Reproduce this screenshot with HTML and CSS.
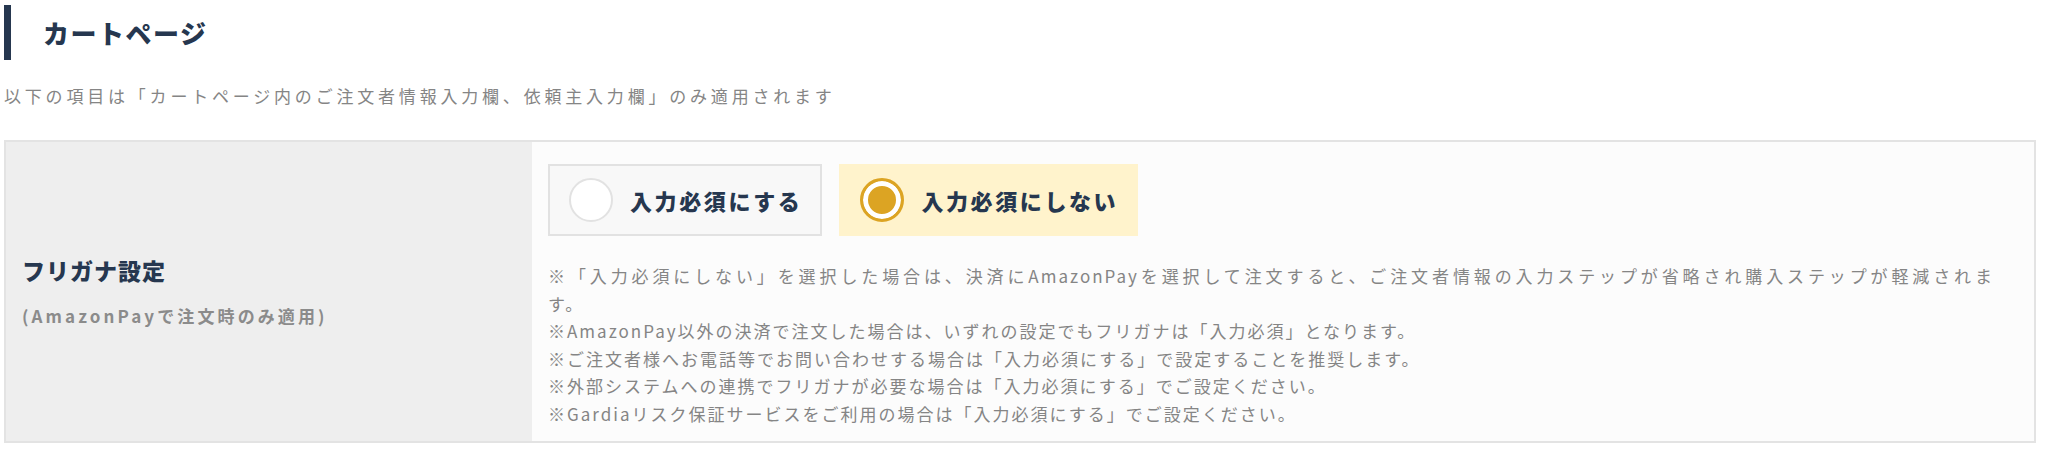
FILE: index.html
```html
<!DOCTYPE html>
<html lang="ja">

<head>
    <meta charset="UTF-8">
    <meta name="viewport" content="width=device-width, initial-scale=1.0">
    <title>カートページ設定</title>
    <link rel="stylesheet" href="styles.css">
</head>

<body>

    <div id="pageContainer">
        <!-- Section heading -->
        <h2 class="sectionTitle">カートページ</h2>
        <p class="sectionLead">以下の項目は「カートページ内のご注文者情報入力欄、依頼主入力欄」のみ適用されます</p>

        <table class="settingTable">
            <tr>
                <th class="settingLabel">
                    <span class="labelMain">フリガナ設定</span>
                    <span class="labelSub">(AmazonPayで注文時のみ適用)</span>
                </th>
                <td class="settingBody">
                    <div class="radioGroup">
                        <label class="radioOption">
                            <input type="radio" name="kana" value="required">
                            <span class="radioMark"></span>
                            <span class="radioText">入力必須にする</span>
                        </label>
                        <label class="radioOption checked">
                            <input type="radio" name="kana" value="optional" checked>
                            <span class="radioMark"></span>
                            <span class="radioText">入力必須にしない</span>
                        </label>
                    </div>
                    <p class="settingNotes">
                        <span class="noteWide">※「入力必須にしない」を選択した場合は、決済にAmazonPayを選択して注文すると、ご注文者情報の入力ステップが省略され購入ステップが軽減されま</span>す。<br>
                        ※AmazonPay以外の決済で注文した場合は、いずれの設定でもフリガナは「入力必須」となります。<br>
                        ※ご注文者様へお電話等でお問い合わせする場合は「入力必須にする」で設定することを推奨します。<br>
                        ※外部システムへの連携でフリガナが必要な場合は「入力必須にする」でご設定ください。<br>
                        ※Gardiaリスク保証サービスをご利用の場合は「入力必須にする」でご設定ください。
                    </p>
                </td>
            </tr>
        </table>
    </div>

</body>

</html>
```

FILE: styles.css
```css
body {
    font-family: "Noto Sans CJK JP", "Noto Sans", sans-serif;
    margin: 0;
    padding: 0;
    background-color: #fff;
    color: #26374f;
}

#pageContainer {
    padding: 5px 12px 0 4px;
}

.sectionTitle {
    display: flex;
    align-items: center;
    height: 55px;
    margin: 0;
    padding-left: 32px;
    border-left: 7px solid #26374f;
    font-size: 26px;
    font-weight: 900;
    letter-spacing: 1.5px;
}

.sectionLead {
    margin: 24px 0 32px;
    color: #858585;
    font-size: 17px;
    line-height: 24px;
    letter-spacing: 3.8px;
}

.settingTable {
    width: 100%;
    border-collapse: collapse;
    border: 2px solid #e3e3e3;
}

.settingLabel {
    width: 510px;
    padding: 0 0 0 16px;
    background-color: #eeeeee;
    text-align: left;
    vertical-align: middle;
}

.labelMain {
    display: block;
    font-size: 23px;
    font-weight: 900;
    line-height: 30px;
    letter-spacing: 1px;
}

.labelSub {
    display: block;
    margin-top: 19px;
    color: #8b8b8b;
    font-size: 17px;
    line-height: 24px;
    letter-spacing: 3.1px;
}

.settingBody {
    padding: 22px 40px 14px 16px;
    background-color: #fcfcfc;
    vertical-align: top;
}

.radioGroup {
    display: flex;
    gap: 17px;
}

.radioOption {
    display: flex;
    align-items: center;
    height: 72px;
    box-sizing: border-box;
    padding: 0 18px 0 19px;
    border: 2px solid #e2e2e2;
    background-color: #f8f8f8;
    cursor: pointer;
}

.radioOption input {
    display: none;
}

.radioMark {
    width: 44px;
    height: 44px;
    box-sizing: border-box;
    border: 2px solid #e2e2e2;
    border-radius: 50%;
    background-color: #fff;
}

.radioText {
    margin-left: 17px;
    font-size: 22px;
    font-weight: 900;
    letter-spacing: 2.6px;
}

.radioOption.checked {
    border-color: #fff3cc;
    background-color: #fff3cc;
}

.radioOption.checked .radioMark {
    border: 3px solid #dca423;
    background-color: #dca423;
    box-shadow: inset 0 0 0 5px #fff;
}

.settingNotes {
    margin: 26px 0 0;
    color: #858585;
    font-size: 17px;
    line-height: 27.5px;
    letter-spacing: 2px;
}

/* first note runs to the cell edge before wrapping */
.noteWide {
    display: block;
    text-align: justify;
    text-align-last: justify;
}
```
